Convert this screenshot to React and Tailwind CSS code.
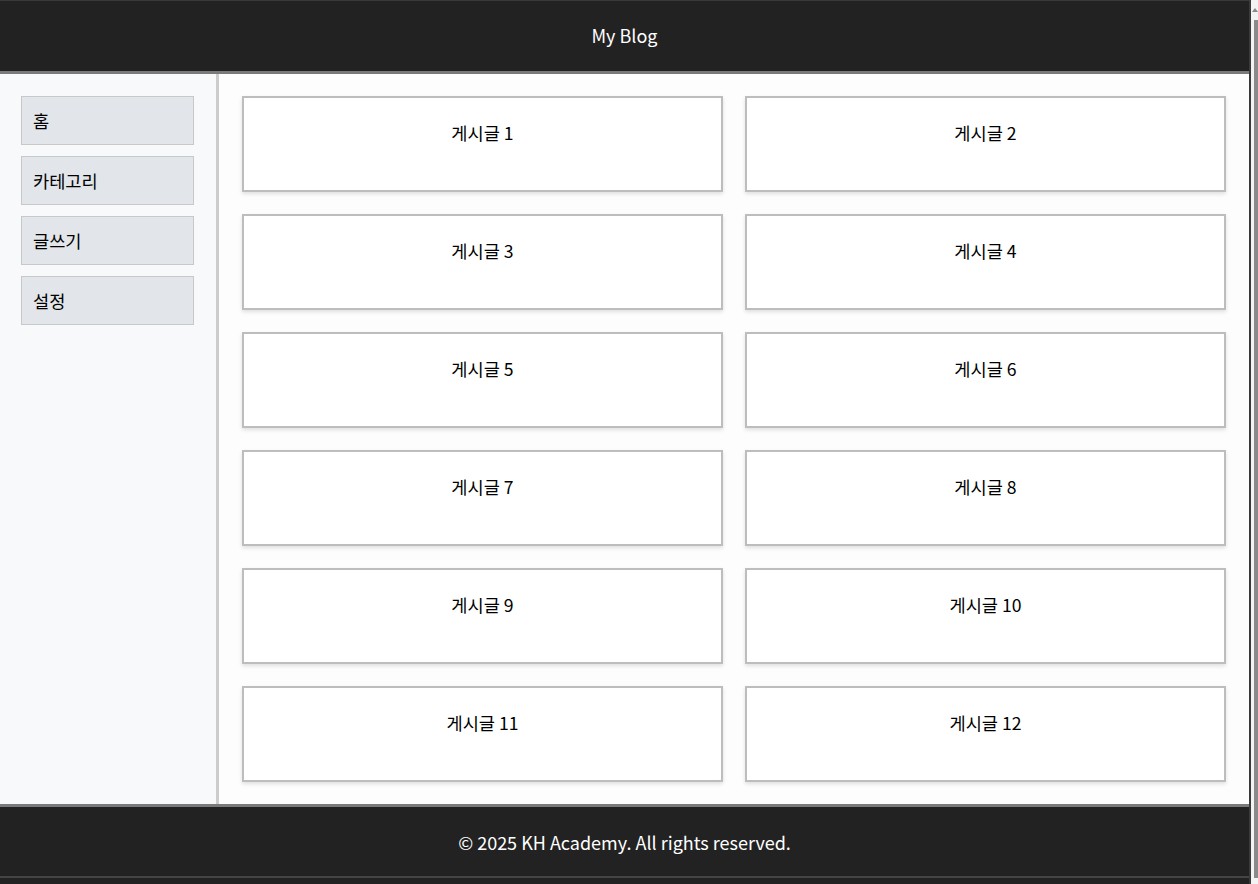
import React from "react";

const menu = ["홈", "카테고리", "글쓰기", "설정"];
const posts = Array.from({ length: 12 }, (_, i) => `게시글 ${i + 1}`);

export default function App() {
  return (
    <div className="w-[1258px] h-[884px] flex bg-[#f3f3f3] overflow-hidden font-['Noto_Sans_CJK_KR','Noto_Sans',sans-serif]">
      <div className="w-[1251px] h-full flex flex-col border-t border-t-[#3a3a3a] border-r-2 border-r-[#3a3a3a]">
        <header className="h-[73px] shrink-0 bg-[#222222] border-b-[3px] border-b-[#7a7a7a] flex items-center justify-center text-white text-[18px] pb-[1px]">
          My Blog
        </header>
        <div className="flex h-[730px]">
          <aside className="w-[219px] shrink-0 bg-[#f8f9fa] border-r-[3px] border-r-[#cccccc] pt-[22px] pl-[21px] pr-[22px] flex flex-col gap-[11px]">
            {menu.map((m) => (
              <div
                key={m}
                className="h-[49px] bg-[#e2e5e9] border border-[#c8c8c8] flex items-center pl-[11px] text-[17.6px] leading-[26px] text-black"
              >
                {m}
              </div>
            ))}
          </aside>
          <main className="flex-1 bg-[#fdfdfd] pt-[22px] pl-[23px] pr-[23px]">
            <div className="grid grid-cols-2 gap-x-[22px] gap-y-[22px]">
              {posts.map((p) => (
                <div
                  key={p}
                  className="h-[96px] bg-white border-2 border-[#bdbdbd] shadow-[0_2px_4px_rgba(0,0,0,0.12)] pt-[22px] text-center text-[17.6px] leading-[26px] text-black"
                >
                  {p}
                </div>
              ))}
            </div>
          </main>
        </div>
        <footer className="flex-1 bg-[#222222] border-t-[3px] border-t-[#7a7a7a] flex flex-col">
          <div className="h-[71px] shrink-0 flex items-center justify-center text-white text-[18px] border-b-2 border-b-[#444444] pt-[2px]">
            © 2025 KH Academy. All rights reserved.
          </div>
        </footer>
      </div>
      <div className="flex-1 relative">
        <div className="absolute right-0 top-[20px] bottom-[6px] w-[4px] bg-[#8a8a8a]" />
        <div className="absolute right-0 top-[8px] w-0 h-0 border-l-[3px] border-l-transparent border-r-[3px] border-r-transparent border-b-[4px] border-b-[#8a8a8a]" />
      </div>
    </div>
  );
}
